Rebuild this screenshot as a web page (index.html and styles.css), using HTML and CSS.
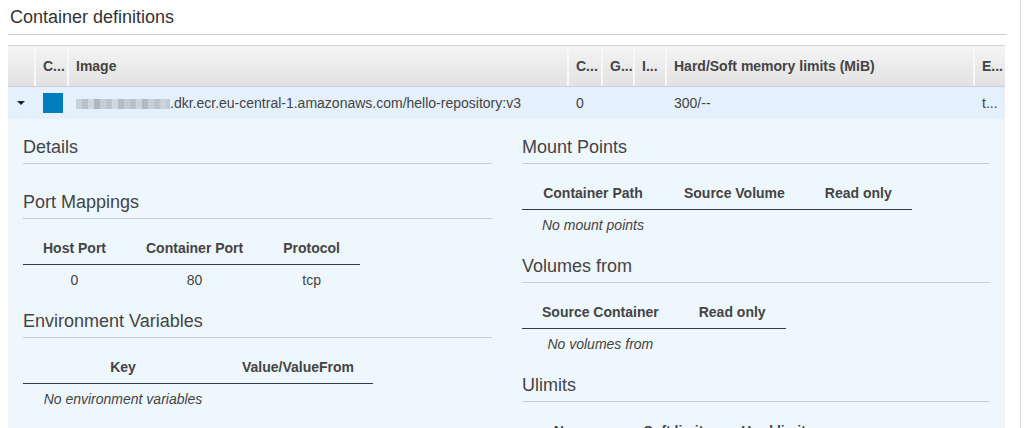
FILE: index.html
```html
<!DOCTYPE html>
<html>
<head>
<meta charset="utf-8">
<link rel="stylesheet" href="styles.css">
</head>
<body>
<div class="page">
  <h2 class="title">Container definitions</h2>
  <div class="grid">
    <div class="grid-head">
      <div class="cell"></div>
      <div class="cell sep">C...</div>
      <div class="cell sep">Image</div>
      <div class="cell sep">C...</div>
      <div class="cell sep">G...</div>
      <div class="cell sep">I...</div>
      <div class="cell sep">Hard/Soft memory limits (MiB)</div>
      <div class="cell sep">E...</div>
    </div>
    <div class="grid-row">
      <div class="cell"><span class="caret"></span></div>
      <div class="cell"><span class="swatch"></span></div>
      <div class="cell"><span class="blur"></span>.dkr.ecr.eu-central-1.amazonaws.com/hello-repository:v3</div>
      <div class="cell">0</div>
      <div class="cell"></div>
      <div class="cell"></div>
      <div class="cell">300/--</div>
      <div class="cell">t...</div>
    </div>
    <div class="detail">
      <div class="col">
        <section class="sec sec-empty">
          <h3 class="sec-title">Details</h3>
        </section>
        <section class="sec">
          <h3 class="sec-title">Port Mappings</h3>
          <table class="kv">
            <thead><tr><th>Host Port</th><th>Container Port</th><th>Protocol</th></tr></thead>
            <tbody><tr><td>0</td><td>80</td><td>tcp</td></tr></tbody>
          </table>
        </section>
        <section class="sec">
          <h3 class="sec-title">Environment Variables</h3>
          <table class="kv">
            <thead><tr><th class="w-key">Key</th><th class="w-val">Value/ValueFrom</th></tr></thead>
            <tbody><tr><td class="empty">No environment variables</td><td></td></tr></tbody>
          </table>
        </section>
      </div>
      <div class="col">
        <section class="sec">
          <h3 class="sec-title">Mount Points</h3>
          <table class="kv">
            <thead><tr><th>Container Path</th><th>Source Volume</th><th>Read only</th></tr></thead>
            <tbody><tr><td class="empty">No mount points</td><td></td><td></td></tr></tbody>
          </table>
        </section>
        <section class="sec">
          <h3 class="sec-title">Volumes from</h3>
          <table class="kv">
            <thead><tr><th>Source Container</th><th>Read only</th></tr></thead>
            <tbody><tr><td class="empty">No volumes from</td><td></td></tr></tbody>
          </table>
        </section>
        <section class="sec">
          <h3 class="sec-title">Ulimits</h3>
          <table class="kv">
            <thead><tr><th class="w-ul">Name</th><th class="w-ul">Soft limit</th><th class="w-ul">Hard limit</th></tr></thead>
            <tbody><tr><td class="empty">No ulimits</td><td></td><td></td></tr></tbody>
          </table>
        </section>
      </div>
    </div>
  </div>
</div>
</body>
</html>
```

FILE: styles.css
```css
html, body {
  margin: 0;
  padding: 0;
  background: #fff;
  overflow: hidden;
}
body {
  font-family: "Liberation Sans", Arial, sans-serif;
  font-size: 14px;
  color: #444;
}
.page {
  width: 1012px;
  height: 428px;
  padding-left: 8px;
  border-right: 1px solid #d9d9d9;
  overflow: hidden;
}
.title {
  margin: 0;
  width: 996px;
  padding: 7px 0 6px 2px;
  font-size: 18px;
  line-height: 21px;
  font-weight: normal;
  color: #333;
  border-bottom: 1px solid #ccc;
}
.grid {
  margin-top: 10px;
  width: 997px;
}
.grid-head, .grid-row {
  display: grid;
  grid-template-columns: 26px 33px 500px 34px 32px 32px 308px 32px;
}
.grid-head {
  height: 40px;
  border-top: 1px solid #d4d4d4;
  border-bottom: 1px solid #cfcfcf;
  background: linear-gradient(#f4f4f4, #e2e2e2);
  font-weight: bold;
  color: #444;
}
.grid-head .cell {
  display: flex;
  align-items: center;
  padding-left: 9px;
  white-space: nowrap;
  overflow: hidden;
}
.grid-head .sep {
  border-left: 2px solid #f8f8f8;
  padding-left: 7px;
}
.grid-row {
  height: 32px;
  background: #e4f0fb;
  color: #444;
}
.grid-row .cell {
  display: flex;
  align-items: center;
  padding-left: 9px;
  white-space: nowrap;
  overflow: hidden;
}
.caret {
  width: 0;
  height: 0;
  border-left: 4px solid transparent;
  border-right: 4px solid transparent;
  border-top: 4px solid #222;
}
.swatch {
  display: block;
  width: 20px;
  height: 20px;
  background: #007dbc;
}
.blur {
  display: inline-block;
  width: 94px;
  height: 10px;
  margin-top: 1px;
  background:
    linear-gradient(90deg,
      #c9d0d8 0 6px, #b8c0c8 6px 12px, #d0d6dd 12px 18px, #aeb6bf 18px 24px,
      #c6cdd5 24px 30px, #bcc3cb 30px 36px, #d2d8de 36px 42px, #b3bbc4 42px 48px,
      #c4cbd3 48px 54px, #b9c1c9 54px 60px, #cdd3da 60px 66px, #b1b9c2 66px 72px,
      #c8cfd6 72px 78px, #bbc2ca 78px 84px, #ccd2d9 84px 90px, #c3cad2 90px 94px);
}
.detail {
  background: #eef7fe;
  display: grid;
  grid-template-columns: 469px 468px;
  column-gap: 30px;
  padding: 18px 15px 40px 15px;
  min-height: 320px;
}
.sec {
  margin-bottom: 16px;
}
.sec-empty {
  margin-bottom: 28px;
}
.sec-title {
  margin: 0;
  font-size: 18px;
  line-height: 20px;
  font-weight: normal;
  color: #444;
  padding-bottom: 6px;
  border-bottom: 1px solid #c9ccd0;
}
.kv {
  margin-top: 15px;
  border-collapse: collapse;
}
.kv th {
  font-weight: bold;
  line-height: 20px;
  padding: 4px 20px 6px;
  text-align: center;
  white-space: nowrap;
  border-bottom: 1px solid #3a3a3a;
  color: #444;
}
.kv td {
  line-height: 20px;
  padding: 5px 20px;
  text-align: center;
  white-space: nowrap;
  color: #444;
}
.kv td.empty {
  font-style: italic;
}
.kv th.w-key { width: 200px; padding: 4px 0 6px; }
.kv th.w-val { width: 150px; padding: 4px 0 6px; }
.kv th.w-ul { width: 100px; padding: 4px 0 6px; }
```
